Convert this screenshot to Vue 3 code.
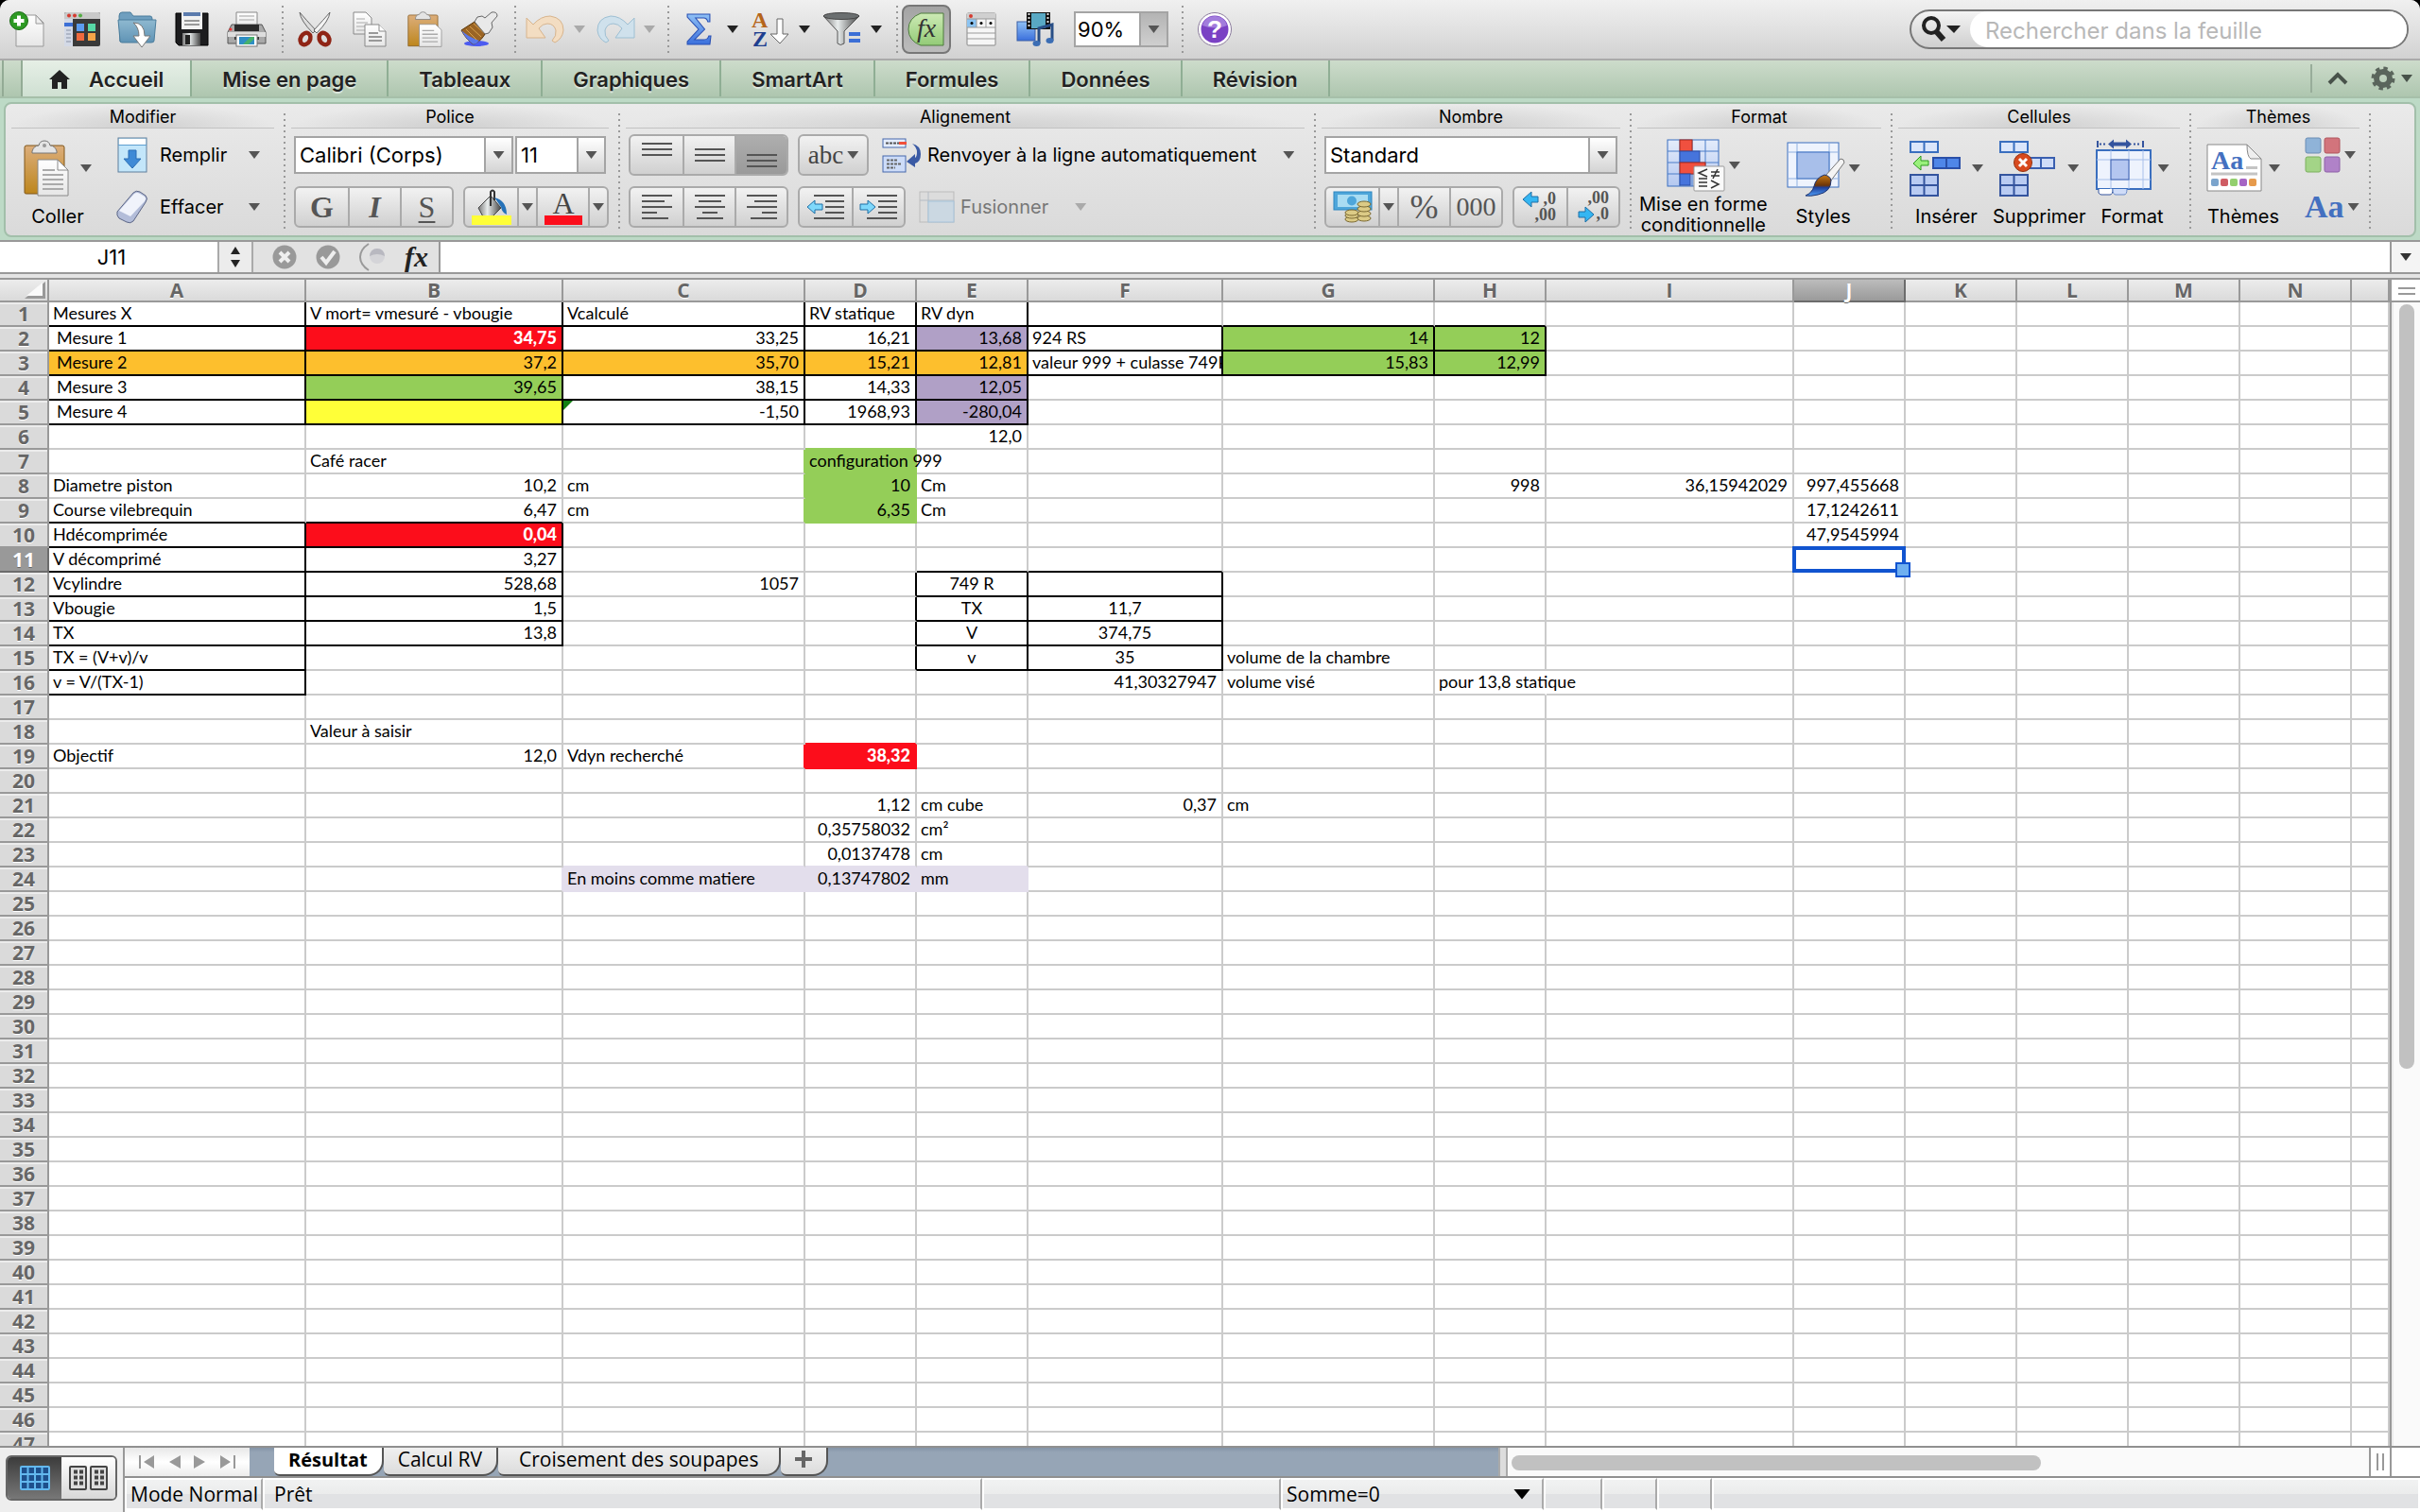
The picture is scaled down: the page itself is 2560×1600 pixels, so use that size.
<template>
  <div class="window">
    <svg class="defs" width="0" height="0" aria-hidden="true">
      <defs>
        <linearGradient id="paper" x1="0" y1="0" x2="0" y2="1">
          <stop offset="0" stop-color="#fff" />
          <stop offset="1" stop-color="#e6e6e6" />
        </linearGradient>
        <linearGradient id="wood" x1="0" y1="0" x2="0" y2="1">
          <stop offset="0" stop-color="#dcae7c" />
          <stop offset="1" stop-color="#bd861c" />
        </linearGradient>
        <linearGradient id="folder" x1="0" y1="0" x2="0" y2="1">
          <stop offset="0" stop-color="#8fb9d0" />
          <stop offset="1" stop-color="#5f93b5" />
        </linearGradient>
        <linearGradient id="metal" x1="0" y1="0" x2="1" y2="0">
          <stop offset="0" stop-color="#777" />
          <stop offset="0.4" stop-color="#e8ecec" />
          <stop offset="1" stop-color="#444" />
        </linearGradient>
        <linearGradient id="blue" x1="0" y1="0" x2="0" y2="1">
          <stop offset="0" stop-color="#8fc0f5" />
          <stop offset="1" stop-color="#3a6fdc" />
        </linearGradient>
        <linearGradient id="cell" x1="0" y1="0" x2="0" y2="1">
          <stop offset="0" stop-color="#e4ecfb" />
          <stop offset="1" stop-color="#b4c8f0" />
        </linearGradient>
        <linearGradient id="leaf" x1="0" y1="0" x2="0" y2="1">
          <stop offset="0" stop-color="#cdeab5" />
          <stop offset="1" stop-color="#93cb77" />
        </linearGradient>
        <linearGradient id="bristle" x1="0" y1="0" x2="0" y2="1">
          <stop offset="0" stop-color="#c87a14" />
          <stop offset="0.5" stop-color="#6e3508" />
          <stop offset="0.6" stop-color="#1e3f9a" />
          <stop offset="1" stop-color="#4f9cf5" />
        </linearGradient>
      </defs>
    </svg>

    <!-- Toolbar -->
    <header class="toolbar">
      <button class="tool" aria-label="Nouveau">
        <svg width="38" height="40" viewBox="0 0 38 40">
          <path d="M7 5h21l8 8v25H7z" fill="url(#paper)" stroke="#999" />
          <path d="M28 5v9h8z" fill="#eee" stroke="#999" />
          <circle cx="10" cy="11" r="9.500" fill="#2e9a24" stroke="#1b6b16" />
          <path d="M10 5.500v11M4.500 11h11" stroke="#fff" stroke-width="4" />
        </svg>
      </button>
      <button class="tool" aria-label="Galerie de modèles">
        <svg width="38" height="36" viewBox="0 0 38 36">
          <rect width="38" height="36" rx="2" fill="#3a3a3a" />
          <path d="M0 7V2q0-2 2-2h34q2 0 2 2v5z" fill="#c9c9c9" />
          <rect y="7" width="9" height="29" fill="#d3d9e6" />
          <rect y="11" width="9" height="4" fill="#3c6fd6" />
          <path d="M2 19h5M2 23h5M2 27h5M2 31h5" stroke="#8a93a6" />
          <circle cx="5" cy="3.500" r="2" fill="#d63b30" />
          <circle cx="11" cy="3.500" r="2" fill="#d63b30" />
          <circle cx="17" cy="3.500" r="2" fill="#54ad44" />
          <rect x="13" y="12" width="8" height="8" fill="#5c9cf0" />
          <rect x="25" y="12" width="8" height="8" fill="#57d8a6" />
          <rect x="13" y="22" width="8" height="8" fill="#ef6a3e" />
          <rect x="25" y="22" width="8" height="8" fill="#f6a548" />
        </svg>
      </button>
      <button class="tool" aria-label="Ouvrir">
        <svg width="42" height="38" viewBox="0 0 42 38">
          <path d="M2 5q0-4 3-4h9l3 4h18q2 0 2 3v24H3z" fill="#6f9fbf" stroke="#4b7d9c" />
          <path d="M1 9h40l-2 22q0 2-3 2H5q-2 0-2-2z" fill="url(#folder)" stroke="#4b7d9c" />
          <path d="M17 12q12 0 12 14h6L26 38 17 26h6q0-9-6-14z" fill="#fff" stroke="#777" />
        </svg>
      </button>
      <button class="tool" aria-label="Enregistrer">
        <svg width="36" height="36" viewBox="0 0 36 36">
          <path d="M1 1h34v34H4l-3-3z" fill="#1d1d1f" stroke="#000" />
          <rect x="7" y="0" width="22" height="18" fill="#f1f1f1" />
          <rect x="9" y="0" width="18" height="4" fill="#5b7bad" />
          <path d="M10 9h16M10 13h16" stroke="#999" stroke-width="2" />
          <rect x="8" y="22" width="19" height="13" fill="url(#metal)" />
          <rect x="11" y="24" width="5" height="10" fill="#222" />
        </svg>
      </button>
      <button class="tool" aria-label="Imprimer">
        <svg width="42" height="38" viewBox="0 0 42 38">
          <path d="M10 1h22v16H10z" fill="url(#paper)" stroke="#888" />
          <path d="M13 5h16M13 9h16" stroke="#ccc" stroke-width="2" />
          <path d="M5 14h32l4 8v12H1V22z" fill="#a9a9a9" stroke="#555" />
          <rect x="8" y="14" width="26" height="7" fill="#2a2a2a" />
          <rect x="1" y="22" width="40" height="5" fill="#ddd" />
          <rect x="8" y="27" width="26" height="3" fill="#333" />
          <rect x="10" y="25" width="22" height="12" fill="#fff" stroke="#777" />
          <path d="M13 27h16v8H13z" fill="#2f8ec4" />
          <path d="M17 35l8-8h4v2l-6 6z" fill="#47b06c" />
          <circle cx="4" cy="19" r="1.500" fill="#f33" />
        </svg>
      </button>
      <span class="sep"></span>
      <button class="tool" aria-label="Couper">
        <svg width="38" height="38" viewBox="0 0 38 38">
          <path d="M3 1q1 9 14 22l3-3Q9 8 3 1z" fill="#ddd" stroke="#666" />
          <path d="M35 1q-1 9-14 22l-3-3Q29 8 35 1z" fill="#f4f4f4" stroke="#666" />
          <ellipse cx="9" cy="29" rx="5" ry="6.500" transform="rotate(30 9 29)" fill="none" stroke="#8f2415" stroke-width="4.500" />
          <ellipse cx="29" cy="29" rx="5" ry="6.500" transform="rotate(-30 29 29)" fill="none" stroke="#8f2415" stroke-width="4.500" />
        </svg>
      </button>
      <button class="tool" aria-label="Copier">
        <svg width="36" height="38" viewBox="0 0 36 38">
          <path d="M1 1h13l6 6v17H1z" fill="url(#paper)" stroke="#888" />
          <path d="M4 8h9M4 12h12M4 16h12M4 20h10" stroke="#aaa" />
          <path d="M13 14h15l7 7v16H13z" fill="url(#paper)" stroke="#888" />
          <path d="M28 14v7h7" fill="#fff" stroke="#888" />
          <path d="M17 23h10M17 27h14M17 31h14" stroke="#999" stroke-width="2" />
        </svg>
      </button>
      <button class="tool" aria-label="Coller">
        <svg width="36" height="38" viewBox="0 0 46 58" preserveAspectRatio="none">
          <path d="M1 8q0-2 2-2h36q2 0 2 2v48H1z" fill="url(#wood)" stroke="#80571a" />
          <path d="M11 10q1-5 5-5 1-4 5-4t5 4q4 0 5 5v3H11z" fill="#e4e4e4" stroke="#777" />
          <path d="M16 21h22l8 9v27H16z" fill="url(#paper)" stroke="#888" />
          <path d="M20 31h16M20 37h21M20 43h21M20 49h21" stroke="#aaa" stroke-width="2" />
        </svg>
      </button>
      <button class="tool" aria-label="Reproduire la mise en forme">
        <svg width="42" height="38" viewBox="0 0 42 38">
          <ellipse cx="18" cy="34" rx="13" ry="3" fill="#4c5bf0" />
          <path d="M2 20l14-9 12 11q-4 9-13 13Q8 31 2 20z" fill="#9a6424" stroke="#5b3607" />
          <path d="M2 20q7 7 19 11-2 3-6 4Q8 31 2 20z" fill="#5a78ea" />
          <path d="M7 19l11 11M11 16l12 11M15 13l11 10" stroke="#d8a24c" />
          <path d="M16 11l3-5 5-1 3 2 7-6q6-1 6 4l-6 7 1 5-4 6-4 1z" fill="#e9e9e9" stroke="#666" />
        </svg>
      </button>
      <span class="sep"></span>
      <div class="split faded">
        <button aria-label="Annuler">
          <svg width="42" height="30" viewBox="0 0 42 30">
            <path d="M1 3l7 7q8-9 18-9 14 2 14 15-1 9-9 13l-3-2q5-5 4-11-2-7-9-7-5 0-9 5l7 10H1z" fill="#f3ddc2" stroke="#d8b48c" />
          </svg>
        </button>
        <button aria-label="Liste annuler"><i class="tri"></i></button>
      </div>
      <div class="split faded">
        <button aria-label="Rétablir">
          <svg width="42" height="30" viewBox="0 0 42 30">
            <path d="M41 3l-7 7Q26 1 16 1 2 3 2 16q1 9 9 13l3-2q-5-5-4-11 2-7 9-7 5 0 9 5l-7 10h20z" fill="#cfe1ec" stroke="#9dbfd3" />
          </svg>
        </button>
        <button aria-label="Liste rétablir"><i class="tri"></i></button>
      </div>
      <span class="sep"></span>
      <div class="split">
        <button aria-label="Somme automatique">
          <svg width="26" height="34" viewBox="0 0 24 34" preserveAspectRatio="none">
            <path d="M1 1h22v8h-2q-1-4-4-4H9l9 12L8 28h9q4 0 5-4h2l-1 9H1v-3l11-13L1 4z" fill="url(#blue)" stroke="#2950b4" />
          </svg>
        </button>
        <button aria-label="Liste somme"><i class="tri"></i></button>
      </div>
      <div class="split">
        <button aria-label="Trier">
          <svg width="40" height="38" viewBox="0 0 40 38">
            <text x="0" y="17" class="ico-serif" fill="#b5651b">A</text>
            <text x="1" y="37" class="ico-serif" fill="#1f3f8f">Z</text>
            <path d="M27 8h6v16h6L30 34 20 24h7z" fill="#fff" stroke="#666" />
          </svg>
        </button>
        <button aria-label="Liste trier"><i class="tri"></i></button>
      </div>
      <div class="split">
        <button aria-label="Filtrer">
          <svg width="42" height="36" viewBox="0 0 42 36">
            <path d="M1 4l15 16v13q3 3 7 0V20L39 4z" fill="url(#metal)" stroke="#555" />
            <ellipse cx="20" cy="4" rx="19" ry="3.500" fill="#6b6f70" stroke="#444" />
            <path d="M28 23h12M28 30h12" stroke="#3c6fd6" stroke-width="4" />
          </svg>
        </button>
        <button aria-label="Liste filtrer"><i class="tri"></i></button>
      </div>
      <span class="sep"></span>
      <button class="fx-toggle" aria-label="Générateur de formules">
        <svg width="40" height="36" viewBox="0 0 40 36">
          <path d="M14 1h24v34H14Q1 30 1 18T14 1z" fill="url(#leaf)" stroke="#4d7a3c" />
          <text x="10" y="26" class="ico-fx" fill="#333">fx</text>
        </svg>
      </button>
      <button class="tool wide" aria-label="Boîte à outils">
        <svg width="32" height="36" viewBox="0 0 32 36">
          <rect x="1" y="1" width="30" height="34" rx="1" fill="#f6f6f6" stroke="#888" />
          <rect x="1" y="1" width="30" height="6" fill="#d0d0d0" />
          <circle cx="5" cy="4" r="2" fill="#d63b30" />
          <rect x="1" y="7" width="10" height="9" fill="#8cc4f2" />
          <path d="M1 7h30M1 16h30M1 22h30M1 28h30M11 7v9M21 7v9" stroke="#999" />
          <circle cx="6" cy="11.500" r="1.500" />
          <circle cx="16" cy="11.500" r="1.500" />
          <circle cx="26" cy="11.500" r="1.500" />
        </svg>
      </button>
      <button class="tool narrow" aria-label="Navigateur de médias">
        <svg width="40" height="38" viewBox="0 0 40 38">
          <rect x="1" y="11" width="19" height="20" fill="url(#blue)" stroke="#3b5fa6" />
          <rect x="11" y="1" width="25" height="18" fill="#111" />
          <rect x="16" y="2" width="15" height="16" fill="#59a9c4" />
          <path d="M13.500 2v16M33.500 2v16" stroke="#ddd" stroke-width="2" stroke-dasharray="2 2" />
          <path d="M24 34V18l14-4v17" fill="none" stroke="#284e86" stroke-width="3" />
          <ellipse cx="21.500" cy="34" rx="4" ry="3" fill="#3b6db4" />
          <ellipse cx="35.500" cy="31" rx="4" ry="3" fill="#3b6db4" />
        </svg>
      </button>
      <div class="combo zoom-combo">
        <select aria-label="Zoom"><option>90%</option></select>
        <span class="knob"><i class="tri"></i></span>
      </div>
      <span class="sep"></span>
      <button class="tool" aria-label="Aide">
        <svg width="38" height="38" viewBox="0 0 38 38">
          <circle cx="19" cy="19" r="17.500" fill="#fff" stroke="#8a7a9c" />
          <circle cx="19" cy="19" r="14.500" fill="#7a41c4" />
          <path d="M6 15q3-10 13-10t13 10q-12 5-26 0z" fill="#a27cdc" />
          <text x="19" y="28" text-anchor="middle" class="ico-help" fill="#fff">?</text>
        </svg>
      </button>
      <div class="search">
        <button aria-label="Options de recherche">
          <svg width="42" height="30" viewBox="0 0 42 30">
            <circle cx="11" cy="11" r="8" fill="none" stroke="#222" stroke-width="4" />
            <path d="M16 17l8 9" stroke="#222" stroke-width="6" />
            <path d="M27 11h15l-7 8z" fill="#222" />
          </svg>
        </button>
        <input type="search" aria-label="Rechercher" placeholder="Rechercher dans la feuille" />
      </div>
    </header>

    <!-- Ribbon tabs -->
    <nav class="tabs">
      <span class="tab-stub"></span>
      <button v-for="(tab, i) in tabs" :key="tab" class="tab" :class="{ active: i === 0 }">
        <svg v-if="i === 0" width="22" height="20" viewBox="0 0 22 20">
          <path d="M11 0l11 10h-3v10h-6v-7H9v7H3V10H0z" fill="#222" />
        </svg>
        {{ tab }}
      </button>
      <div class="tabs-end">
        <button aria-label="Réduire le ruban">
          <svg width="22" height="14" viewBox="0 0 22 14">
            <path d="M2 12l9-9 9 9" fill="none" stroke="#48524a" stroke-width="4" />
          </svg>
        </button>
        <button aria-label="Préférences du ruban">
          <svg width="44" height="26" viewBox="0 0 44 26">
            <circle cx="13" cy="13" r="7" fill="none" stroke="#5a655c" stroke-width="6" />
            <circle cx="13" cy="13" r="10.500" fill="none" stroke="#5a655c" stroke-width="4" stroke-dasharray="4.250 4" />
            <path d="M32 9h12l-6 8z" fill="#48524a" />
          </svg>
        </button>
      </div>
    </nav>

    <!-- Ribbon -->
    <div class="ribbon">
      <div class="panel">
        <section class="group g-edit">
          <h2>Modifier</h2>
          <div class="body">
            <button class="big">
              <span class="pic">
                <svg width="48" height="60" viewBox="0 0 48 60">
                  <path d="M1 8q0-2 2-2h38q2 0 2 2v48q0 1-2 1H3q-2 0-2-1z" fill="url(#wood)" stroke="#80571a" />
                  <path d="M9 12q2-6 7-6 1-5 6-5t6 5q5 0 7 6v2H9z" fill="#e4e4e4" stroke="#777" />
                  <circle cx="22" cy="6" r="2" fill="#999" />
                  <path d="M15 21h21l11 11v27H15z" fill="url(#paper)" stroke="#888" />
                  <path d="M36 21v11h11z" fill="#fff" stroke="#888" />
                  <path d="M20 32h13M20 37h22M20 42h22M20 47h22M20 52h22" stroke="#aaa" stroke-width="2" />
                </svg>
                <i class="tri"></i>
              </span>
              Coller
            </button>
            <div class="rows">
              <button class="line-btn edit">
                <svg width="34" height="38" viewBox="0 0 34 38">
                  <rect x="2" y="1" width="30" height="36" fill="#c3e6fa" stroke="#5f7f9c" />
                  <rect x="3" y="2" width="28" height="6" fill="#fff" />
                  <path d="M2 8.500h30" stroke="#5f9fd0" />
                  <path d="M13 14h8v9h5l-9 10-9-10h5z" fill="#3f8ad6" stroke="#2b6db4" />
                </svg>
                <span>Remplir</span>
                <i class="tri"></i>
              </button>
              <button class="line-btn edit">
                <svg width="34" height="36" viewBox="0 0 34 36">
                  <path d="M1 23L18 3q3-3 7-1l6 4q3 3 0 7L18 33q-3 3-7 1l-8-4q-3-3-2-7z" fill="#b3bdd9" stroke="#5c6686" />
                  <path d="M3 22L19 4q3-2 6 0l5 3q2 2 0 5L15 28z" fill="#f0f3fb" />
                </svg>
                <span>Effacer</span>
                <i class="tri"></i>
              </button>
            </div>
          </div>
        </section>

        <section class="group g-font">
          <h2>Police</h2>
          <div class="body">
            <div class="rows">
              <div class="row font-row">
                <div class="combo font-combo">
                  <select aria-label="Police"><option>Calibri (Corps)</option></select>
                  <span class="knob"><i class="tri"></i></span>
                </div>
                <div class="combo size-combo">
                  <select aria-label="Taille"><option>11</option></select>
                  <span class="knob"><i class="tri"></i></span>
                </div>
              </div>
              <div class="row between">
                <div class="seg">
                  <button class="letter bold">G</button>
                  <button class="letter italic">I</button>
                  <button class="letter under">S</button>
                </div>
                <div class="seg">
                  <button aria-label="Couleur de remplissage">
                    <svg width="42" height="38" viewBox="0 0 42 38">
                      <path d="M7 20L20 7l11 13-11 11H13z" fill="url(#metal)" stroke="#444" />
                      <path d="M20 18V3q2-3 4 0v9" fill="none" stroke="#333" stroke-width="2" />
                      <path d="M24 9q13 3 13 18-5-2-6-8z" fill="#2672b8" />
                      <rect y="28" width="42" height="10" fill="#ffff38" />
                    </svg>
                  </button>
                  <button class="thin" aria-label="Autres couleurs de remplissage"><i class="tri"></i></button>
                  <button aria-label="Couleur de police">
                    <svg width="40" height="38" viewBox="0 0 40 38">
                      <text x="20" y="26" text-anchor="middle" class="ico-a" fill="#444">A</text>
                      <rect y="28" width="40" height="10" fill="#fc0d1b" />
                    </svg>
                  </button>
                  <button class="thin" aria-label="Autres couleurs de police"><i class="tri"></i></button>
                </div>
              </div>
            </div>
          </div>
        </section>

        <section class="group g-align">
          <h2>Alignement</h2>
          <div class="body">
            <div class="rows">
              <div class="row">
                <div class="seg">
                  <button v-for="(a, i) in valign" :key="a.label" :aria-label="a.label" :class="{ on: i === 2 }">
                    <svg width="32" height="28" viewBox="0 0 32 28">
                      <path v-for="y in a.ys" :key="y" :d="`M0 ${y}h32`" class="rule" />
                    </svg>
                  </button>
                </div>
                <div class="seg">
                  <button class="abc">abc<i class="tri"></i></button>
                </div>
                <button class="line-btn">
                  <svg width="42" height="38" viewBox="0 0 42 38">
                    <rect x="1" y="2" width="24" height="9" fill="#e5edfc" stroke="#4668ac" />
                    <path d="M4 6.500h14" stroke="#555" stroke-width="2" stroke-dasharray="3 1" />
                    <path d="M18 6.500h8" stroke="#f0503a" stroke-width="3" />
                    <rect x="1" y="20" width="24" height="17" fill="#cddcf8" stroke="#4668ac" />
                    <path d="M5 24.500h12M5 28.500h15M5 32.500h9" stroke="#666" stroke-width="2" stroke-dasharray="3 1" />
                    <path d="M32 7q9 2 9 11 0 8-6 10v4L26 26l9-8v4q2-1 2-6 0-5-5-9z" fill="#3a5aa4" />
                  </svg>
                  <span>Renvoyer à la ligne automatiquement</span>
                  <i class="tri"></i>
                </button>
              </div>
              <div class="row">
                <div class="seg">
                  <button v-for="a in halign" :key="a.label" :aria-label="a.label">
                    <svg width="32" height="28" viewBox="0 0 32 28">
                      <path v-for="(l, i) in a.lines" :key="i" :d="`M${l[0]} ${2 + i * 6}h${l[1]}`" class="rule" />
                    </svg>
                  </button>
                </div>
                <div class="seg">
                  <button aria-label="Diminuer le retrait">
                    <svg width="42" height="28" viewBox="0 0 42 28">
                      <path d="M8 2h32M20 8h20M20 14h20M20 20h20M8 26h32" class="rule" />
                      <path d="M9 7v4h8v6H9v4l-8-7z" fill="#7fd8fb" stroke="#1f6fa6" />
                    </svg>
                  </button>
                  <button aria-label="Augmenter le retrait">
                    <svg width="42" height="28" viewBox="0 0 42 28">
                      <path d="M8 2h32M20 8h20M20 14h20M20 20h20M8 26h32" class="rule" />
                      <path d="M9 7v4H1v6h8v4l8-7z" fill="#7fd8fb" stroke="#1f6fa6" />
                    </svg>
                  </button>
                </div>
                <button class="line-btn faded" disabled>
                  <svg width="38" height="34" viewBox="0 0 38 34">
                    <rect x="1" y="1" width="36" height="32" fill="#dcdcdc" stroke="#bbb" />
                    <path d="M1 10h36M10 1v32" stroke="#b4bcc4" />
                    <rect x="10" y="11" width="27" height="22" fill="#cbd8e2" stroke="#a6c3da" />
                  </svg>
                  <span>Fusionner</span>
                  <i class="tri"></i>
                </button>
              </div>
            </div>
          </div>
        </section>

        <section class="group g-number">
          <h2>Nombre</h2>
          <div class="body">
            <div class="rows">
              <div class="row">
                <div class="combo number-combo">
                  <select aria-label="Format de nombre"><option>Standard</option></select>
                  <span class="knob"><i class="tri"></i></span>
                </div>
              </div>
              <div class="row">
                <div class="seg">
                  <button aria-label="Format monétaire">
                    <svg width="42" height="34" viewBox="0 0 42 34">
                      <rect x="1" y="1" width="40" height="19" fill="#4ea6da" stroke="#2c86c0" />
                      <rect x="5" y="4" width="32" height="13" fill="#a9dcf2" />
                      <circle cx="20" cy="10.500" r="5" fill="#4ea6da" />
                      <g fill="#dccb86" stroke="#7c6a32">
                        <ellipse cx="20" cy="30" rx="7" ry="3" />
                        <ellipse cx="20" cy="26" rx="7" ry="3" />
                        <ellipse cx="20" cy="23" rx="7" ry="3" />
                        <ellipse cx="33" cy="29" rx="7" ry="3" />
                        <ellipse cx="33" cy="24" rx="7" ry="3" />
                        <ellipse cx="33" cy="19" rx="7" ry="3" />
                        <ellipse cx="33" cy="14" rx="7" ry="3" />
                      </g>
                    </svg>
                  </button>
                  <button class="thin" aria-label="Autres devises"><i class="tri"></i></button>
                  <button class="letter percent">%</button>
                  <button class="letter zeros">000</button>
                </div>
                <div class="seg">
                  <button aria-label="Ajouter une décimale">
                    <svg width="40" height="34" viewBox="0 0 40 34">
                      <text x="36" y="14" text-anchor="end" class="ico-num">,0</text>
                      <text x="36" y="31" text-anchor="end" class="ico-num">,00</text>
                      <path d="M10 1v5h7v6h-7v5L1 9z" fill="#35b6f2" stroke="#1f6fa6" />
                    </svg>
                  </button>
                  <button aria-label="Réduire les décimales">
                    <svg width="40" height="34" viewBox="0 0 40 34">
                      <text x="36" y="13" text-anchor="end" class="ico-num">,00</text>
                      <text x="36" y="30" text-anchor="end" class="ico-num">,0</text>
                      <path d="M11 17v5H4v6h7v5l9-8z" fill="#35b6f2" stroke="#1f6fa6" />
                    </svg>
                  </button>
                </div>
              </div>
            </div>
          </div>
        </section>

        <section class="group g-format">
          <h2>Format</h2>
          <div class="body">
            <button class="big tight">
              <span class="pic">
                <svg width="62" height="56" viewBox="0 0 62 56">
                  <rect x="1" y="1" width="54" height="49" fill="url(#cell)" stroke="#3a6fbf" />
                  <path d="M1 13h54M1 25h54M1 37h54M14 1v49M27 1v49M41 1v49" stroke="#4a7cc8" />
                  <rect x="14" y="1" width="13" height="12" fill="#f0503f" stroke="#a3281c" />
                  <rect x="14" y="13" width="21" height="12" fill="#4674dc" stroke="#2a4fa8" />
                  <rect x="14" y="25" width="27" height="12" fill="#f0503f" stroke="#a3281c" />
                  <rect x="14" y="37" width="11" height="12" fill="#4674dc" stroke="#2a4fa8" />
                  <rect x="29" y="29" width="32" height="26" rx="1" fill="#fafafa" stroke="#999" />
                  <path d="M43 32l-9 4 9 4M34 42h9M47 35h9M47 39h9M54 32l-5 10M34 46h9M34 50h9M47 44l8 4-8 4" fill="none" stroke="#333" stroke-width="1.500" />
                </svg>
                <i class="tri"></i>
              </span>
              <span>Mise en forme<br />conditionnelle</span>
            </button>
            <button class="big">
              <span class="pic">
                <svg width="62" height="60" viewBox="0 0 62 60">
                  <rect x="1" y="3" width="54" height="47" fill="#eef3fd" stroke="#3a6fbf" />
                  <path d="M1 13h54M1 41h54M11 3v47M45 3v47" stroke="#8fb0e0" />
                  <rect x="11" y="13" width="34" height="28" fill="#a8bfea" stroke="#3a6fbf" />
                  <path d="M57 20q4 0 4 4L47 43l-6-5z" fill="#f4f4f4" stroke="#777" />
                  <path d="M40 37q6 1 7 6 0 12-14 15-8 2-13 1 7-3 9-10 2-9 11-12z" fill="url(#bristle)" stroke="#1b3270" />
                </svg>
                <i class="tri"></i>
              </span>
              Styles
            </button>
          </div>
        </section>

        <section class="group g-cells">
          <h2>Cellules</h2>
          <div class="body">
            <button class="big">
              <span class="pic">
                <svg width="54" height="60" viewBox="0 0 54 60">
                  <path d="M1 2h29v11H1zM15.500 2v11" fill="#dbe6fb" stroke="#3a6fbf" stroke-width="2" />
                  <path d="M1 37h29v22H1zM15.500 37v22M1 48h29" fill="#b9cbf2" stroke="#34549e" stroke-width="2" />
                  <path d="M25 19h28v11H25zM39 19v11" fill="#4f86e8" stroke="#2a4fa8" stroke-width="2" />
                  <path d="M12 17v5h8v5h-8v5l-8-7z" fill="#9af07c" stroke="#2d9a1e" />
                </svg>
                <i class="tri"></i>
              </span>
              Insérer
            </button>
            <button class="big">
              <span class="pic">
                <svg width="60" height="60" viewBox="0 0 60 60">
                  <path d="M1 2h29v11H1zM15.500 2v11" fill="#dbe6fb" stroke="#3a6fbf" stroke-width="2" />
                  <path d="M1 37h29v22H1zM15.500 37v22M1 48h29" fill="#b9cbf2" stroke="#34549e" stroke-width="2" />
                  <path d="M31 19h27v11H31zM44 19v11" fill="#cfdcf8" stroke="#3a5fb0" stroke-width="2" />
                  <circle cx="25" cy="24" r="9.500" fill="#d84a1e" stroke="#93300f" />
                  <path d="M21 20l8 8M29 20l-8 8" stroke="#fff" stroke-width="3" />
                </svg>
                <i class="tri"></i>
              </span>
              Supprimer
            </button>
            <button class="big">
              <span class="pic near">
                <svg width="60" height="60" viewBox="0 0 60 60">
                  <path d="M2 1v7M50 1v7" stroke="#34549e" stroke-width="2" />
                  <path d="M4 4.500h8M40 4.500h8" stroke="#34549e" stroke-width="2" stroke-dasharray="2 2" />
                  <path d="M13 4.500l6-5v3h13v-3l6 5-6 5v-3H19v3z" fill="#34549e" />
                  <rect x="1" y="11" width="57" height="41" fill="#eef3fd" stroke="#3a6fbf" stroke-width="2" />
                  <path d="M1 21h57M1 42h57M16 11v41M35 11v41M50 11v41" stroke="#a8c0ea" />
                  <rect x="16" y="21" width="19" height="21" fill="#b4c6f0" stroke="#3a5fb0" />
                  <path d="M3 52v4q1 2 3 2h9q3 0 3-6" fill="#fff" stroke="#34549e" />
                  <path d="M18 52q0 6 3 6h9q3 0 3-6" fill="#cfdcf8" stroke="#6a8ac8" />
                </svg>
                <i class="tri"></i>
              </span>
              Format
            </button>
          </div>
        </section>

        <section class="group g-themes">
          <h2>Thèmes</h2>
          <div class="body">
            <button class="big">
              <span class="pic near">
                <svg width="60" height="52" viewBox="0 0 60 52">
                  <path d="M1 1h42l15 15v34H1z" fill="#fff" stroke="#888" />
                  <path d="M43 1q0 13 4 15h11z" fill="#eee" stroke="#888" />
                  <text x="5" y="27" class="ico-theme">Aa</text>
                  <path d="M42 25.500h12M5 32h49" stroke="#c4c4c4" stroke-width="3" />
                  <rect v-for="(c, i) in swatches" :key="c" :x="5 + i * 10" y="37" width="8" height="8" rx="2" :fill="c" />
                </svg>
                <i class="tri"></i>
              </span>
              Thèmes
            </button>
            <div class="rows">
              <button class="line-btn mini" aria-label="Couleurs du thème">
                <svg width="38" height="38" viewBox="0 0 38 38">
                  <rect x="1" y="1" width="16" height="16" rx="2" fill="#8fb3d8" stroke="#6a8db4" />
                  <rect x="21" y="1" width="16" height="16" rx="2" fill="#d2747c" stroke="#b0545c" />
                  <rect x="1" y="21" width="16" height="16" rx="2" fill="#a3d487" stroke="#7cb05e" />
                  <rect x="21" y="21" width="16" height="16" rx="2" fill="#b082c8" stroke="#8e60a8" />
                </svg>
                <i class="tri"></i>
              </button>
              <button class="line-btn mini aa">Aa<i class="tri"></i></button>
            </div>
          </div>
        </section>
      </div>
    </div>

    <!-- Formula bar -->
    <div class="formula-bar">
      <input class="name-box" aria-label="Zone Nom" value="J11" />
      <button class="stepper" aria-label="Plages nommées">
        <svg width="10" height="22" viewBox="0 0 10 22">
          <path d="M5 0l5 8H0zM5 22l-5-8h10z" fill="#222" />
        </svg>
      </button>
      <div class="fx-tools">
        <button aria-label="Annuler la saisie">
          <svg width="26" height="26" viewBox="0 0 26 26">
            <circle cx="13" cy="13" r="12.500" fill="#999" />
            <path d="M8 8l10 10M18 8L8 18" stroke="#eee" stroke-width="4" />
          </svg>
        </button>
        <button aria-label="Valider la saisie">
          <svg width="26" height="26" viewBox="0 0 26 26">
            <circle cx="13" cy="13" r="12.500" fill="#999" />
            <path d="M6 13l5 6 9-12" fill="none" stroke="#eee" stroke-width="4" />
          </svg>
        </button>
        <button aria-label="Formules">
          <svg width="28" height="30" viewBox="0 0 28 30">
            <path d="M10 1Q1 7 1 15t9 14" fill="none" stroke="#999" stroke-width="2" />
            <circle cx="19" cy="14" r="8" fill="#d4d4d8" />
            <path d="M11 14q8-4 16 0-1-8-8-8t-8 8z" fill="#b8b8c0" />
          </svg>
        </button>
        <button class="fx-label">fx</button>
      </div>
      <input class="formula" aria-label="Formule" />
      <button class="expand" aria-label="Développer"><i class="tri"></i></button>
    </div>

    <!-- Sheet -->
    <main class="sheet">
      <div class="grid">
        <table>
          <colgroup>
            <col class="c-head" />
            <col v-for="c in columns" :key="c" :class="'c-' + c" />
            <col />
          </colgroup>
          <thead>
            <tr>
              <th class="corner">
                <svg width="22" height="18" viewBox="0 0 22 18"><path d="M22 0v18H0z" fill="#999" /><path d="M19 1v14H2z" fill="#fafafa" /></svg>
              </th>
              <th v-for="c in columns" :key="c" scope="col" :class="{ current: c === 'J' }">{{ c }}</th>
              <th></th>
            </tr>
          </thead>
          <tbody>
            <tr v-for="r in 47" :key="r">
              <th scope="row" :class="{ current: r === 11 }">{{ r }}</th>
              <td v-for="c in columns" :key="c" :class="cellClass(c, r)">
                {{ text(c, r) }}
                <i v-if="c + r === 'C5'" class="flag"></i>
                <i v-if="c + r === 'J11'" class="selection"></i>
              </td>
              <td></td>
            </tr>
          </tbody>
        </table>
      </div>
      <div class="vscroll">
        <div class="vsplit"></div>
        <div class="vtrack"><div class="vthumb"></div></div>
      </div>
    </main>

    <!-- Sheet tabs and status -->
    <footer class="bottom">
      <div class="views">
        <div class="view-seg">
          <button class="on" aria-label="Mode Normal">
            <svg width="32" height="26" viewBox="0 0 32 26">
              <rect x="1" y="1" width="30" height="24" rx="1" fill="#1d4f8c" stroke="#63b8ee" stroke-width="2" />
              <path d="M2 9h28M2 17h28M8.500 2v22M16 2v22M23.500 2v22" stroke="#63b8ee" stroke-width="2" />
            </svg>
          </button>
          <button aria-label="Mise en page">
            <svg width="42" height="26" viewBox="0 0 42 26">
              <g fill="#ddd" stroke="#444" stroke-width="2">
                <rect x="1" y="1" width="17" height="24" rx="1" />
                <rect x="23" y="1" width="17" height="24" rx="1" />
              </g>
              <path d="M5 6.500h10M5 12.500h10M5 18.500h10M27 6.500h10M27 12.500h10M27 18.500h10" stroke="#444" stroke-width="4" stroke-dasharray="4 2" />
            </svg>
          </button>
        </div>
      </div>
      <div class="bars">
        <div class="tab-bar">
          <div class="tab-nav">
            <button aria-label="Première feuille"><svg width="18" height="14" viewBox="0 0 18 14"><path d="M1 0h2v14H1zM17 0v14L6 7z" /></svg></button>
            <button aria-label="Feuille précédente"><svg width="12" height="14" viewBox="0 0 12 14"><path d="M12 0v14L0 7z" /></svg></button>
            <button aria-label="Feuille suivante"><svg width="12" height="14" viewBox="0 0 12 14"><path d="M0 0v14l12-7z" /></svg></button>
            <button aria-label="Dernière feuille"><svg width="18" height="14" viewBox="0 0 18 14"><path d="M15 0h2v14h-2zM1 0v14l11-7z" /></svg></button>
          </div>
          <div class="sheets">
            <button class="sheet-tab active">Résultat</button>
            <button class="sheet-tab">Calcul RV</button>
            <button class="sheet-tab long">Croisement des soupapes</button>
            <button class="sheet-tab add" aria-label="Ajouter une feuille">
              <svg width="18" height="18" viewBox="0 0 18 18"><path d="M9 0v18M0 9h18" stroke="#666" stroke-width="4" /></svg>
            </button>
          </div>
          <div class="hgrip"></div>
          <div class="htrack"><div class="hthumb"></div></div>
          <div class="hsplit"></div>
          <div class="resize"></div>
        </div>
        <div class="status">
          <span class="s-mode">Mode Normal</span>
          <span class="s-state">Prêt</span>
          <span class="s-wide"></span>
          <button class="s-sum">Somme=0<i class="tri"></i></button>
          <span class="s-a"></span>
          <span class="s-b"></span>
          <span class="s-b"></span>
          <span class="s-rest"></span>
        </div>
      </div>
    </footer>
  </div>
</template>

<script setup>
const tabs = [
  "Accueil",
  "Mise en page",
  "Tableaux",
  "Graphiques",
  "SmartArt",
  "Formules",
  "Données",
  "Révision",
];
const columns = "ABCDEFGHIJKLMN".split("");
const swatches = ["#7ba4cc", "#cf5c64", "#93cf6e", "#a565c4", "#e69a4c"];

const valign = [
  { label: "Aligner en haut", ys: [2, 8, 14] },
  { label: "Aligner au centre", ys: [8, 14, 20] },
  { label: "Aligner en bas", ys: [14, 20, 26] },
];
const halign = [
  { label: "Aligner à gauche", lines: [[0, 32], [0, 24], [0, 32], [0, 16], [0, 28]] },
  { label: "Centrer", lines: [[0, 32], [4, 24], [0, 32], [8, 16], [2, 28]] },
  { label: "Aligner à droite", lines: [[0, 32], [8, 24], [0, 32], [16, 16], [4, 28]] },
];

// Numbers go right by default, anything in `centered` goes to the middle.
const cells = {
  A1: "Mesures X", B1: "V mort= vmesuré - vbougie", C1: "Vcalculé", D1: "RV statique", E1: "RV dyn",
  A2: "Mesure 1", B2: "34,75", C2: "33,25", D2: "16,21", E2: "13,68", F2: "924 RS", G2: "14", H2: "12",
  A3: "Mesure 2", B3: "37,2", C3: "35,70", D3: "15,21", E3: "12,81", F3: "valeur 999 + culasse 749R", G3: "15,83", H3: "12,99",
  A4: "Mesure 3", B4: "39,65", C4: "38,15", D4: "14,33", E4: "12,05",
  A5: "Mesure 4", C5: "-1,50", D5: "1968,93", E5: "-280,04",
  E6: "12,0",
  B7: "Café racer", D7: "configuration 999",
  A8: "Diametre piston", B8: "10,2", C8: "cm", D8: "10", E8: "Cm", H8: "998", I8: "36,15942029", J8: "997,455668",
  A9: "Course vilebrequin", B9: "6,47", C9: "cm", D9: "6,35", E9: "Cm", J9: "17,1242611",
  A10: "Hdécomprimée", B10: "0,04", J10: "47,9545994",
  A11: "V décomprimé", B11: "3,27",
  A12: "Vcylindre", B12: "528,68", C12: "1057", E12: "749 R",
  A13: "Vbougie", B13: "1,5", E13: "TX", F13: "11,7",
  A14: "TX", B14: "13,8", E14: "V", F14: "374,75",
  A15: "TX = (V+v)/v", E15: "v", F15: "35", G15: "volume de la chambre",
  A16: "v = V/(TX-1)", F16: "41,30327947", G16: "volume visé", H16: "pour 13,8 statique",
  B18: "Valeur à saisir",
  A19: "Objectif", B19: "12,0", C19: "Vdyn recherché", D19: "38,32",
  D21: "1,12", E21: "cm cube", F21: "0,37", G21: "cm",
  D22: "0,35758032", E22: "cm²",
  D23: "0,0137478", E23: "cm",
  C24: "En moins comme matiere", D24: "0,13747802", E24: "mm",
};

function range(ref) {
  const [a, b = a] = ref.split(":");
  const out = [];
  for (let c = a.charCodeAt(0); c <= b.charCodeAt(0); c++) {
    for (let r = +a.slice(1); r <= +b.slice(1); r++) {
      out.push(String.fromCharCode(c) + r);
    }
  }
  return out;
}
function refs(list) {
  return list.split(" ").flatMap(range);
}

const fills = {};
Object.entries({
  red: "B2 B10 D19",
  orange: "A3:E3",
  green: "B4 G2:H3 D7:D9",
  yellow: "B5",
  purple: "E2 E4:E5",
  lavender: "C24:E24",
}).forEach(([name, list]) => refs(list).forEach((k) => (fills[k] = name)));

const rightLine = new Set(refs("A1:E5 F2:H3 A10:B14 A15:A16 D12:D15 E12:F15"));
const bottomLine = new Set(refs("A1:E5 F1:H3 A9:B14 A15:A16 E11:F15"));
const centered = new Set(refs("E12:F15"));
const indented = new Set(refs("A2:A5"));
const bold = new Set(refs("B2 B10 D19"));

function text(c, r) {
  return cells[c + r] || "";
}

function cellClass(c, r) {
  const key = c + r;
  const next = String.fromCharCode(c.charCodeAt(0) + 1) + r;
  const below = c + (r + 1);
  const value = text(c, r);
  const right = rightLine.has(key) ? "black" : fills[key] || fills[next];
  const bottom = bottomLine.has(key) ? "black" : fills[key] || fills[below];
  return [
    fills[key] && "fill-" + fills[key],
    right && "r-" + right,
    bottom && "b-" + bottom,
    {
      num: /^-?[\d,]+$/.test(value) && !centered.has(key),
      mid: centered.has(key),
      indent: indented.has(key),
      strong: bold.has(key),
      clip: key === "F3",
      "r-none": key === "H16",
    },
  ];
}
</script>

<style>
html,
body {
  margin: 0;
  background: #000;
}
</style>

<style scoped>
.window {
  display: flex;
  flex-direction: column;
  height: 100vh;
  overflow: hidden;
  border-radius: 10px 10px 0 0;
  background: #e4e4e4;
  color: #000;
  font-family: Inter, "Liberation Sans", sans-serif;
  font-size: 20px;
}
.defs {
  position: absolute;
}
* {
  box-sizing: border-box;
}
button,
input,
select {
  margin: 0;
  padding: 0;
  border: 0;
  border-radius: 0;
  background: none;
  color: inherit;
  font: inherit;
  outline: none;
  appearance: none;
}
button {
  display: flex;
  align-items: center;
  justify-content: center;
  white-space: nowrap;
}
svg {
  display: block;
  flex: none;
  overflow: visible;
}
.tri {
  flex: none;
  width: 12px;
  height: 8px;
  background: #555;
  clip-path: polygon(0 0, 100% 0, 50% 100%);
}

/* Toolbar */
.toolbar {
  display: flex;
  align-items: center;
  flex: none;
  height: 64px;
  padding: 0 12px 0 0;
  border-bottom: 2px solid #aaa;
  background: linear-gradient(#f0f0f0, #d2d2d2);
}
.tool {
  width: 58px;
  height: 56px;
}
.tool.wide {
  width: 64px;
}
.tool.narrow {
  width: 50px;
}
.sep {
  flex: none;
  width: 2px;
  height: 50px;
  margin: 0 4px 0 8px;
  background: repeating-linear-gradient(#999 0 2px, transparent 2px 6px);
}
.split {
  display: flex;
  height: 56px;
  margin-right: 4px;
}
.split.faded {
  margin-right: 2px;
}
.split button:first-child {
  width: 54px;
}
.split button:last-child {
  width: 18px;
}
.split .tri {
  background: #222;
}
.faded .tri {
  background: #aaa;
}
.fx-toggle {
  width: 52px;
  height: 52px;
  border: 2px solid #777;
  border-radius: 8px;
  background: linear-gradient(#a4a4a4, #bcbcbc);
}
.ico-serif {
  font: bold 24px "Liberation Serif", serif;
}
.ico-fx {
  font: italic 28px "Liberation Serif", serif;
}
.ico-help {
  font: bold 26px "Liberation Sans", sans-serif;
}
.ico-a {
  font: 32px "Liberation Serif", serif;
}
.ico-num {
  fill: #555;
  font: bold 18px "Liberation Serif", serif;
}
.ico-theme {
  fill: #4470c0;
  font: bold 28px "Liberation Serif", serif;
}
.combo {
  display: grid;
  flex: none;
  height: 40px;
  border: 2px solid #a4a4a4;
  background: #fff;
}
.combo select {
  grid-area: 1 / 1;
  width: 100%;
  padding-left: 4px;
  font-size: 22px;
}
.combo .knob {
  display: flex;
  align-items: center;
  justify-content: center;
  grid-area: 1 / 1;
  justify-self: end;
  width: 29px;
  border-left: 2px solid #a4a4a4;
  background: linear-gradient(#fff, #d4d4d4);
  pointer-events: none;
}
.zoom-combo {
  width: 100px;
  height: 38px;
  margin: 0 6px 0 16px;
}
.zoom-combo select {
  padding-left: 2px;
}
.zoom-combo .knob {
  background: linear-gradient(#b4b4b4, #cfcfcf);
}
.search {
  display: flex;
  align-items: stretch;
  width: 528px;
  height: 42px;
  margin-left: auto;
  overflow: hidden;
  border: 2px solid #777;
  border-radius: 21px;
  background: linear-gradient(#f4f4f4, #cfcfcf);
}
.search button {
  width: 62px;
}
.search input {
  flex: 1;
  padding: 2px 0 0 16px;
  border-radius: 20px 0 0 20px;
  background: #fff;
  font-size: 24px;
}
.search input::placeholder {
  color: #b8b8b8;
  opacity: 1;
}

/* Ribbon tabs */
.tabs {
  display: flex;
  flex: none;
  height: 40px;
  padding-left: 2px;
  border-bottom: 2px solid #a6bfa9;
  background: linear-gradient(#cddccb, #aec6af);
}
.tab-stub {
  width: 22px;
  border-left: 2px solid #93ab95;
  border-right: 2px solid #93ab95;
}
.tab {
  padding: 2px 32px 0;
  border-right: 2px solid #8fae94;
  color: #222;
  font-size: 22px;
  font-weight: 600;
  text-shadow: 0 2px 1px rgba(255, 255, 255, 0.6);
}
.tab svg {
  margin-right: 20px;
}
.tab.active {
  padding: 2px 28px 0;
  background: linear-gradient(#e6efe6, #cfe0d2);
}
.tabs-end {
  display: flex;
  align-items: center;
  gap: 24px;
  margin: 4px 8px 4px auto;
  padding-left: 16px;
  border-left: 2px solid #98ad9a;
}

/* Ribbon */
.ribbon {
  flex: none;
  padding: 4px 4px 3px;
  border-bottom: 2px solid #999;
  background: #bddac6;
}
.panel {
  display: flex;
  height: 143px;
  border: 2px solid #a2bfaa;
  border-radius: 8px;
  background: linear-gradient(#eaeaea, #dadada);
}
.group {
  flex: none;
  background: repeating-linear-gradient(#999 0 2px, transparent 2px 6px) right 10px / 2px 124px no-repeat;
}
.g-edit { width: 296px; }
.g-font { width: 354px; }
.g-align { width: 736px; }
.g-number { width: 334px; }
.g-format { width: 276px; }
.g-cells { width: 316px; }
.g-themes { width: 190px; }
.group h2 {
  height: 26px;
  margin: 0 12px 0 6px;
  border-bottom: 1px solid #c2c2c2;
  background: radial-gradient(ellipse at bottom, #cfcfcf, transparent 70%);
  font-size: 18px;
  font-weight: 400;
  line-height: 27px;
  text-align: center;
}
.body {
  display: flex;
  align-items: flex-start;
}
.rows {
  display: flex;
  flex-direction: column;
  gap: 11px;
  padding-top: 6px;
}
.row {
  display: flex;
  align-items: center;
  gap: 10px;
  height: 44px;
}
.between {
  justify-content: space-between;
}
.font-row {
  gap: 2px;
}
.g-edit .body { padding-left: 19px; gap: 26px; }
.g-font .body { padding-left: 9px; }
.g-align .body { padding-left: 9px; }
.g-number .body { padding-left: 9px; }
.g-format .body { padding-left: 8px; gap: 20px; }
.g-cells .body { padding-left: 18px; gap: 10px; }
.g-themes .body { padding-left: 16px; gap: 26px; }
.big {
  flex-direction: column;
  justify-content: flex-start;
  padding-top: 12px;
  line-height: 26px;
}
.pic {
  display: flex;
  align-items: center;
  gap: 12px;
  height: 60px;
  margin-bottom: 8px;
}
.pic.near {
  gap: 6px;
}
.g-format .pic {
  gap: 4px;
}
.big.tight {
  padding-top: 9px;
  line-height: 22px;
}
.tight .pic {
  margin-bottom: 0;
}
.line-btn {
  justify-content: flex-start;
  gap: 6px;
  height: 44px;
}
.line-btn .tri {
  margin-left: 22px;
}
.line-btn.edit {
  gap: 12px;
  width: 152px;
}
.line-btn.edit .tri {
  margin-left: auto;
}
.row > .line-btn {
  margin-left: 4px;
}
.line-btn.mini {
  gap: 4px;
}
.line-btn.mini .tri {
  margin-left: 0;
}
.line-btn.aa {
  color: #4470c0;
  font: bold 34px "Liberation Serif", serif;
}
.line-btn.faded {
  color: #777;
}
.font-combo { width: 232px; }
.size-combo { width: 96px; }
.number-combo { width: 310px; }
.seg {
  display: flex;
  height: 44px;
  border: 2px solid #aaa;
  border-radius: 6px;
  background: linear-gradient(#f2f2f2, #d0d0d0);
}
.seg button {
  width: 55px;
}
.seg button + button {
  border-left: 2px solid #aaa;
}
.seg .thin {
  width: 20px;
}
.seg .on {
  border-radius: 0 4px 4px 0;
  background: linear-gradient(#aeaeae, #9a9a9a);
}
.seg .letter {
  color: #555;
  font: 32px "Liberation Serif", serif;
}
.seg .bold { font-weight: 700; }
.seg .italic { font-style: italic; font-weight: 700; }
.seg .under { text-decoration: underline; text-decoration-thickness: 2px; text-underline-offset: 4px; }
.seg .percent { font-size: 36px; }
.seg .zeros { font-size: 28px; }
.seg .abc {
  gap: 4px;
  width: 71px;
  color: #444;
  font: 27px "Liberation Serif", serif;
}
.rule {
  fill: none;
  stroke: #555;
  stroke-width: 2;
}

/* Formula bar */
.formula-bar {
  display: flex;
  flex: none;
  height: 34px;
  border-bottom: 2px solid #999;
  background: #e2e2e2;
}
.name-box {
  width: 230px;
  padding-left: 6px;
  background: #fff;
  font-size: 22px;
  text-align: center;
}
.stepper {
  width: 38px;
  border: 2px solid #aaa;
  border-width: 0 2px;
  background: #ececec;
}
.fx-tools {
  display: flex;
  align-items: center;
  gap: 20px;
  width: 198px;
  padding-left: 20px;
  border-right: 2px solid #999;
}
.fx-label {
  color: #222;
  font: italic bold 30px "Liberation Serif", serif;
}
.formula {
  flex: 1;
  padding-left: 6px;
  background: #fff;
}
.expand {
  width: 32px;
  border-left: 2px solid #999;
  background: #f4f4f4;
}
.expand .tri {
  background: #333;
}

/* Sheet */
.sheet {
  display: flex;
  flex: 1;
  min-height: 0;
  margin-top: 4px;
  border-top: 2px solid #999;
  background: #fff;
}
.grid {
  flex: 1;
  min-width: 0;
  overflow: hidden;
  border-right: 2px solid #999;
}
table {
  width: 100%;
  border-collapse: separate;
  border-spacing: 0;
  table-layout: fixed;
  font-family: Lato, "Liberation Sans", sans-serif;
  font-size: 18px;
  line-height: 22px;
}
.c-head { width: 52px; }
.c-A, .c-B { width: 272px; }
.c-C { width: 256px; }
.c-D, .c-E, .c-H, .c-J, .c-K, .c-L, .c-M, .c-N { width: 118px; }
.c-F { width: 206px; }
.c-G { width: 224px; }
.c-I { width: 262px; }
th {
  height: 26px;
  padding: 0;
  border-right: 2px solid #999;
  border-bottom: 2px solid #999;
  background: #dadada;
  box-shadow: inset 0 2px #ececec;
  color: #666;
  font-family: "Open Sans", sans-serif;
  font-size: 21px;
  font-weight: 700;
  line-height: 22px;
  text-shadow: 0 1px #fff;
}
thead th {
  height: 24px;
  background: linear-gradient(#ececec, #dadada);
  box-shadow: none;
}
th.current {
  border-color: #6c6c6c;
  background: #999;
  box-shadow: none;
  color: #fff;
  text-shadow: 0 1px #666;
}
thead th.current {
  background: linear-gradient(#bcbcbc, #9a9a9a);
}
.corner svg {
  margin: 0 2px 0 auto;
}
td {
  position: relative;
  height: 26px;
  padding: 0 4px 2px;
  border-right: 2px solid #cbcbcb;
  border-bottom: 2px solid #cbcbcb;
  white-space: nowrap;
}
td.num { padding-right: 5px; text-align: right; }
td.mid { text-align: center; }
td.indent { padding-left: 8px; }
td.strong { color: #fff; font-weight: 900; }
td.clip { overflow: hidden; }
.fill-red { background: #fc0d1b; }
.fill-orange { background: #fdbf2d; }
.fill-green { background: #94ce58; }
.fill-yellow { background: #ffff38; }
.fill-purple { background: #b0a0c6; }
.fill-lavender { background: #e3deec; }
.r-red { border-right-color: #fc0d1b; }
.r-green { border-right-color: #94ce58; }
.r-lavender { border-right-color: #e3deec; }
.r-none { border-right-color: #fff; }
.b-red { border-bottom-color: #fc0d1b; }
.b-green { border-bottom-color: #94ce58; }
.b-lavender { border-bottom-color: #e3deec; }
.r-black { border-right-color: #000; }
.b-black { border-bottom-color: #000; }
td:has(.selection) {
  z-index: 1;
}
.flag {
  position: absolute;
  top: 0;
  left: 0;
  width: 10px;
  height: 10px;
  background: #128012;
  clip-path: polygon(0 0, 100% 0, 0 100%);
}
.selection {
  position: absolute;
  inset: -2px;
  border: 4px solid #1154d0;
}
.selection::after {
  content: "";
  position: absolute;
  right: -9px;
  bottom: -9px;
  width: 12px;
  height: 12px;
  border: 2px solid #1154d0;
  background: #6fb0f0;
}
.vscroll {
  display: flex;
  flex-direction: column;
  width: 30px;
  background: #fafafa;
}
.vsplit {
  height: 24px;
  border-bottom: 2px solid #999;
  background: linear-gradient(#999, #999) 7px 8px / 18px 2px no-repeat, linear-gradient(#999, #999) 7px 14px / 18px 2px no-repeat, #fff;
}
.vtrack {
  flex: 1;
  padding: 2px 6px 0;
  border-left: 2px solid #ececec;
}
.vthumb {
  height: 67%;
  border-radius: 8px;
  background: #c1c1c1;
}

/* Bottom */
.bottom {
  display: flex;
  flex: none;
  height: 70px;
  border-top: 2px solid #909090;
  font-family: "Open Sans", sans-serif;
  font-size: 21px;
}
.views {
  width: 132px;
  padding: 8px 6px;
  border-right: 2px solid #999;
  background: #eee;
}
.view-seg {
  display: flex;
  height: 48px;
  overflow: hidden;
  border: 2px solid #666;
  border-radius: 6px;
}
.view-seg button {
  flex: 1;
  background: linear-gradient(#fff, #d8d8d8);
}
.view-seg .on {
  background: linear-gradient(#3c3c3c, #777);
}
.bars {
  display: flex;
  flex: 1;
  flex-direction: column;
  min-width: 0;
}
.tab-bar {
  display: flex;
  height: 32px;
  border-bottom: 2px solid #909090;
  background: linear-gradient(#8595a8, #96a5b6 5px);
}
.tab-nav {
  display: flex;
  align-items: center;
  justify-content: space-between;
  width: 132px;
  padding: 0 14px;
  background: linear-gradient(#e8e8e8, #fff 50%, #ececec);
  fill: #999;
}
.sheets {
  display: flex;
  flex: 1;
  padding-left: 26px;
}
.sheet-tab {
  height: 30px;
  padding: 0 15px 4px;
  border-right: 2px solid #555;
  border-bottom: 2px solid #555;
  border-radius: 0 0 16px 6px;
  background: linear-gradient(#f0f0f0, #dcdcdc);
}
.sheet-tab.active {
  background: #fff;
  font-size: 20px;
  font-weight: 700;
}
.sheet-tab.long {
  padding: 0 22px 4px;
}
.hgrip {
  width: 10px;
  border: 2px solid #aaa;
  border-width: 0 2px;
  background: #ddd;
}
.htrack {
  width: 911px;
  padding: 8px 4px;
  background: #fafafa;
}
.hthumb {
  width: 62%;
  height: 16px;
  border-radius: 8px;
  background: #c1c1c1;
}
.hsplit {
  width: 24px;
  border: 2px solid #999;
  border-width: 0 2px;
  background: linear-gradient(#999, #999) 6px 6px / 2px 18px no-repeat, linear-gradient(#999, #999) 12px 6px / 2px 18px no-repeat, #fff;
}
.resize {
  width: 30px;
  background: #fff;
}
.status {
  display: flex;
  flex: 1;
  background: #fff;
}
.status > * {
  display: flex;
  align-items: center;
  height: 34px;
  padding: 0 4px;
  border: 2px solid #fff;
  border-right-color: #aaa;
  background: linear-gradient(#f1f2f2, #ebecec 50%, #e1e2e4 50%);
  white-space: nowrap;
}
.s-mode { width: 146px; }
.status .s-state { width: 761px; padding-left: 10px; }
.s-wide { width: 316px; }
.status .s-sum { width: 278px; padding: 0 12px 0 4px; justify-content: space-between; }
.s-sum .tri { width: 18px; height: 11px; background: #000; }
.s-a { width: 62px; }
.s-b { width: 58px; }
.status .s-rest { flex: 1; border-right-color: #fff; }
</style>
